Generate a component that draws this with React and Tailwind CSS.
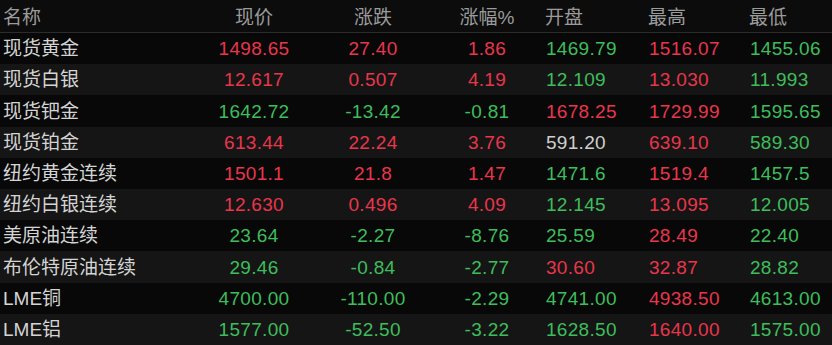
import React from 'react';

const UP = 'text-[#e8364c]';
const DOWN = 'text-[#3ebd5c]';
const FLAT = 'text-[#cfcfcf]';

// c: colour key per value column -> u up, d down, f flat
const rows = [
    { name: '现货黄金', v: ['1498.65', '27.40', '1.86', '1469.79', '1516.07', '1455.06'], c: 'uuudud' },
    { name: '现货白银', v: ['12.617', '0.507', '4.19', '12.109', '13.030', '11.993'], c: 'uuudud' },
    { name: '现货钯金', v: ['1642.72', '-13.42', '-0.81', '1678.25', '1729.99', '1595.65'], c: 'ddduud' },
    { name: '现货铂金', v: ['613.44', '22.24', '3.76', '591.20', '639.10', '589.30'], c: 'uuufud' },
    { name: '纽约黄金连续', v: ['1501.1', '21.8', '1.47', '1471.6', '1519.4', '1457.5'], c: 'uuudud' },
    { name: '纽约白银连续', v: ['12.630', '0.496', '4.09', '12.145', '13.095', '12.005'], c: 'uuudud' },
    { name: '美原油连续', v: ['23.64', '-2.27', '-8.76', '25.59', '28.49', '22.40'], c: 'ddddud' },
    { name: '布伦特原油连续', v: ['29.46', '-0.84', '-2.77', '30.60', '32.87', '28.82'], c: 'ddduud' },
    { name: 'LME铜', v: ['4700.00', '-110.00', '-2.29', '4741.00', '4938.50', '4613.00'], c: 'ddddud' },
    { name: 'LME铝', v: ['1577.00', '-52.50', '-3.22', '1628.50', '1640.00', '1575.00'], c: 'ddddud' },
];

const colorOf = { u: UP, d: DOWN, f: FLAT };

const cellClass = [
    'text-center',
    'text-center',
    'text-center',
    'pl-[5px]',
    'pl-[4px]',
    'pl-[4px]',
];

const gridCols = 'grid grid-cols-[195px_118px_120px_108px_104px_101px_1fr] items-center';

export default function App() {
    return (
        <div
            className="w-[832px] h-[345px] bg-[#0b0b0b] flex flex-col overflow-hidden text-[19px] leading-none"
            style={{ fontFamily: '"Liberation Sans", "Noto Sans CJK SC", sans-serif' }}
        >
            {/* header */}
            <div className={`${gridCols} h-[33px] border-b border-[#2c2c2c] bg-[#0c0c0c] text-[#9b9b9b] pt-[2px]`}>
                <div className="pl-[3px]">名称</div>
                <div className="text-center">现价</div>
                <div className="text-center">涨跌</div>
                <div className="text-center">涨幅%</div>
                <div className="pl-[4px]">开盘</div>
                <div className="pl-[3px]">最高</div>
                <div className="pl-[3px]">最低</div>
            </div>

            {rows.map((row, i) => (
                <div
                    key={row.name}
                    className={`${gridCols} flex-1 tracking-[0.3px] ${i % 2 === 1 ? 'bg-[#151515]' : 'bg-[#080808]'}`}
                >
                    <div className="pl-[3px] text-[#d4d4d4] tracking-normal">{row.name}</div>
                    {row.v.map((val, j) => (
                        <div key={j} className={`${cellClass[j]} ${colorOf[row.c[j]]}`}>
                            {val}
                        </div>
                    ))}
                </div>
            ))}
        </div>
    );
}
